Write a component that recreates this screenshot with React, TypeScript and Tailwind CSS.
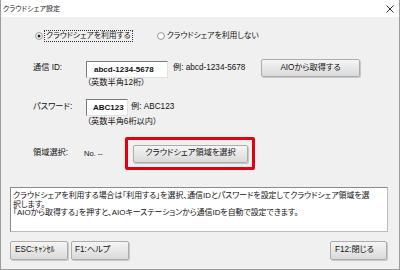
import React from "react";

const F = "font-['Liberation_Sans','Noto_Sans_CJK_JP',sans-serif] [font-feature-settings:'palt']";

function Btn({ children, className }: { children: React.ReactNode; className: string }) {
  return (
    <div
      className={
        "flex items-center whitespace-nowrap border border-[#acacac] rounded-[2px] bg-linear-to-b from-[#f5f5f5] to-[#dadada] text-[8.2px] leading-none text-[#111] shadow-[1px_1px_0_#c8c8c8] " +
        className
      }
    >
      {children}
    </div>
  );
}

function Radio({ checked }: { checked: boolean }) {
  return (
    <svg width="8" height="8" viewBox="0 0 8 8" className="shrink-0">
      <circle cx="4" cy="4" r="3.4" fill="#fff" stroke="#8c8c8c" strokeWidth="0.9" />
      {checked && <circle cx="4" cy="4" r="1.5" fill="#222" />}
    </svg>
  );
}

export default function App() {
  return (
    <div className={"w-[400px] h-[270px] bg-[#f0f0f0] border-x border-b border-[#9c9c9c] flex flex-col text-[#111] " + F}>
      {/* title bar */}
      <div className="h-[17px] bg-white flex items-center justify-between pl-[2px] pr-[5px]">
        <span className="text-[7px] leading-none text-[#222]">クラウドシェア設定</span>
        <svg width="8" height="8" viewBox="0 0 8 8">
          <path d="M0.5 0.5 L7.5 7.5 M7.5 0.5 L0.5 7.5" stroke="#333" strokeWidth="1" />
        </svg>
      </div>

      {/* radio row */}
      <div className="mt-[13px] h-[12px] flex items-center text-[7.8px] leading-none whitespace-nowrap">
        <div className="ml-[34px]"><Radio checked /></div>
        <span className="ml-[1px] h-[12px] px-[1px] flex items-center border border-dotted border-[#333]">クラウドシェアを利用する</span>
        <div className="ml-[24px]"><Radio checked={false} /></div>
        <span className="ml-[2px]">クラウドシェアを利用しない</span>
      </div>

      {/* ID row */}
      <div className="mt-[17px] h-[18px] flex items-center text-[8.2px] leading-none whitespace-nowrap">
        <span className="ml-[32px] w-[53px]">通信 ID:</span>
        <div className="w-[82px] h-[17px] mt-[3px] bg-white border border-[#e2e2e2] border-t-[#7a7a7a] border-l-[#7a7a7a] flex items-center pl-[7px] text-[8px] font-bold">
          abcd-1234-5678
        </div>
        <span className="w-[93px] pl-[5px]">例: abcd-1234-5678</span>
        <Btn className="w-[99px] h-[18px] justify-center">AIOから取得する</Btn>
      </div>

      <div className="mt-[2px] h-[9px] flex items-center text-[8.2px] leading-none">
        <span className="ml-[86px]">（英数半角12桁）</span>
      </div>

      {/* password row */}
      <div className="mt-[11px] h-[17px] flex items-center text-[8.2px] leading-none whitespace-nowrap">
        <span className="ml-[32px] w-[53px]">パスワード:</span>
        <div className="w-[42px] h-[17px] bg-white border border-[#e2e2e2] border-t-[#7a7a7a] border-l-[#7a7a7a] flex items-center pl-[6px] text-[8px] font-bold">
          ABC123
        </div>
        <span className="pl-[3px]">例: ABC123</span>
      </div>

      <div className="mt-[2px] h-[9px] flex items-center text-[8.2px] leading-none">
        <span className="ml-[86px]">（英数半角6桁以内）</span>
      </div>

      {/* region row */}
      <div className="mt-[10px] h-[33px] flex items-center text-[8.2px] leading-none whitespace-nowrap">
        <span className="ml-[32px] w-[51px]">領域選択:</span>
        <span className="w-[41px] text-[7.5px]">No. --</span>
        <div className="w-[130px] h-[33px] border-[3px] border-[#e3000f] rounded-[2px] flex items-center pl-[5px]">
          <Btn className="w-[115px] h-[18px] justify-center">クラウドシェア領域を選択</Btn>
        </div>
      </div>

      {/* description */}
      <div className="mt-[17px] ml-[9px] w-[378px] h-[45px] bg-white border border-[#bcbcbc] border-t-[#8a8a8a] border-l-[#8a8a8a] pl-[2px] pt-[4px] text-[7.9px] leading-[8.5px]">
        <div className="whitespace-nowrap">クラウドシェアを利用する場合は「利用する」を選択、通信IDとパスワードを設定してクラウドシェア領域を選</div>
        <div className="whitespace-nowrap">択します。</div>
        <div className="whitespace-nowrap">「AIOから取得する」を押すと、AIOキーステーションから通信IDを自動で設定できます。</div>
      </div>

      {/* bottom buttons */}
      <div className="mt-[9px] h-[19px] flex items-center">
        <Btn className="ml-[9px] w-[58px] h-[19px] pl-[4px]">ESC:ｷｬﾝｾﾙ</Btn>
        <Btn className="ml-[3px] w-[58px] h-[19px] pl-[3px]">F1:ヘルプ</Btn>
        <Btn className="ml-auto mr-[12px] w-[57px] h-[19px] pl-[4px]">F12:閉じる</Btn>
      </div>
    </div>
  );
}
